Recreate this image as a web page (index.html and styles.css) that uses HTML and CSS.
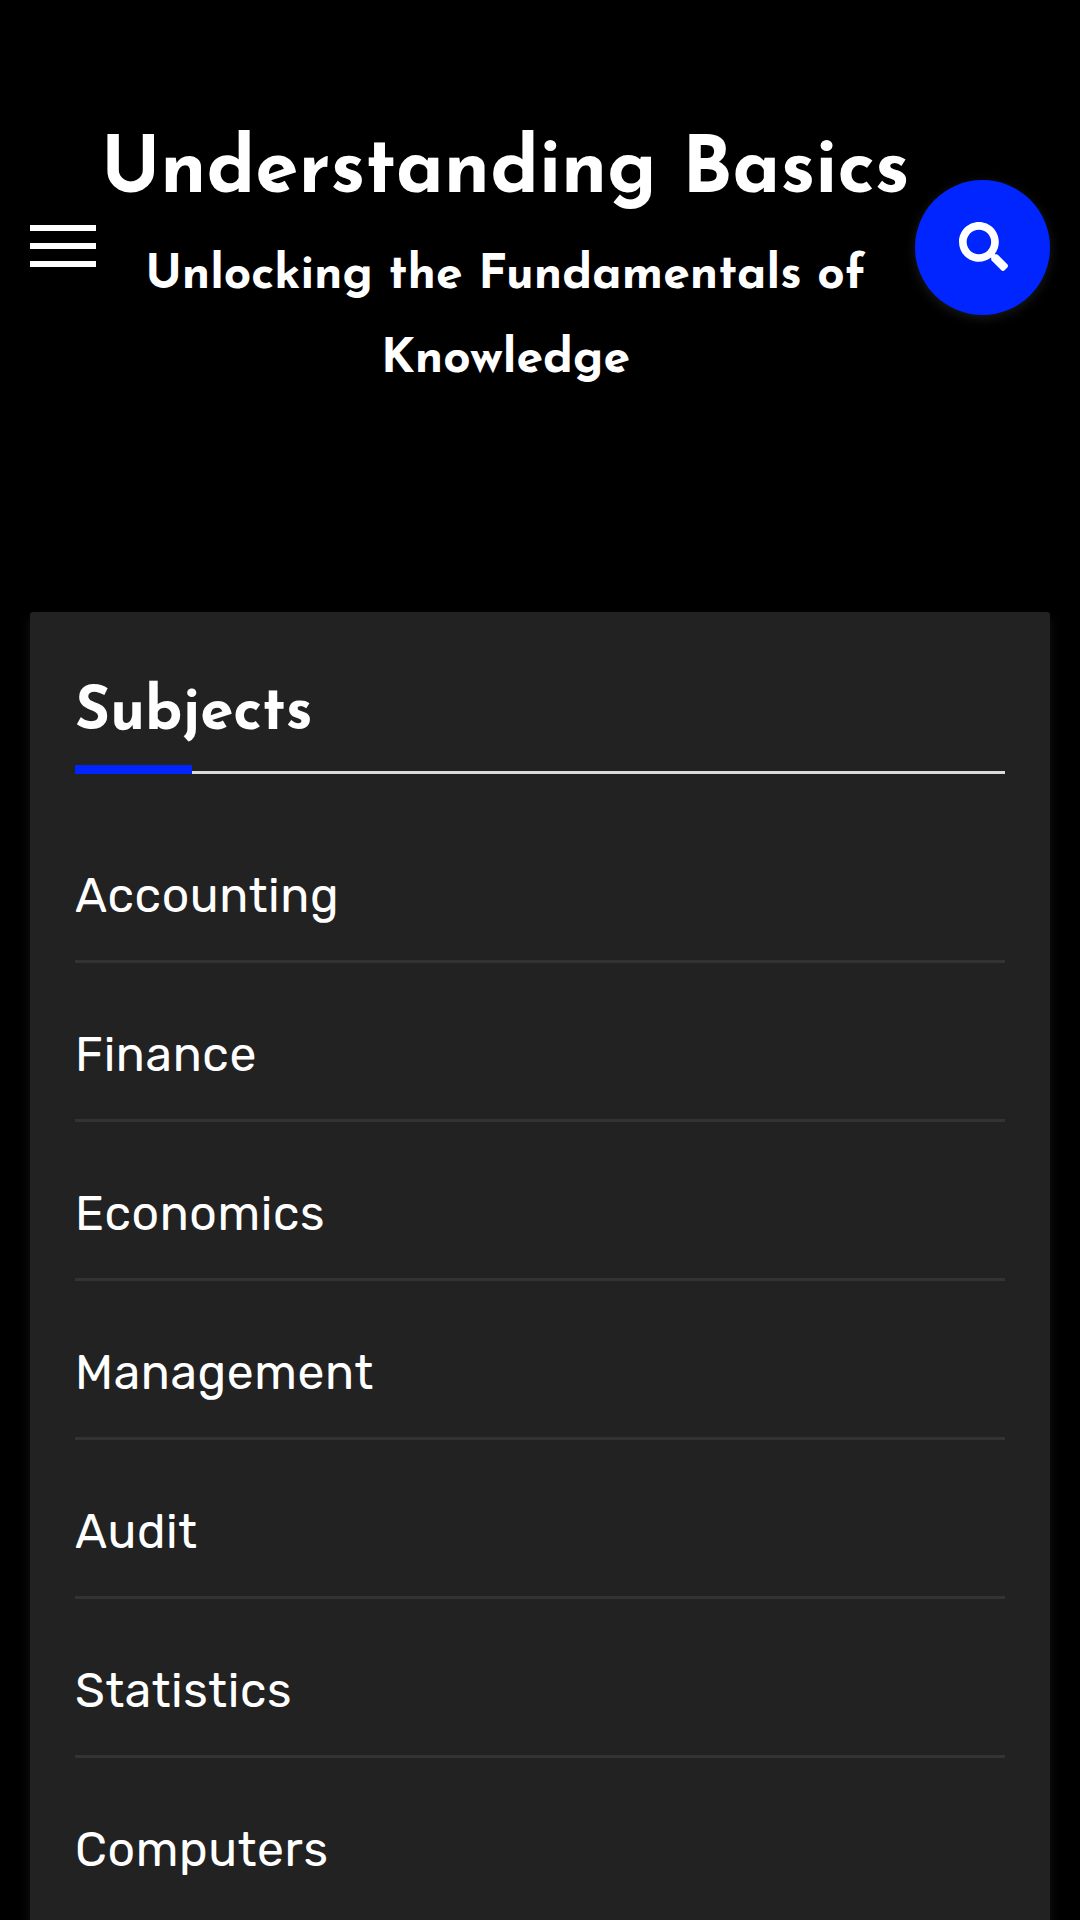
FILE: index.html
```html
<!DOCTYPE html>
<html lang="en">
<head>
<meta charset="utf-8">
<title>Understanding Basics</title>
<link rel="stylesheet" href="styles.css">
</head>
<body>
<header class="site-header">
  <button class="menu-toggle" aria-label="Menu"><span></span><span></span><span></span></button>
  <div class="branding">
    <h1 class="site-title">Understanding Basics</h1>
    <p class="site-tagline">Unlocking the Fundamentals of Knowledge</p>
  </div>
  <button class="search-toggle" aria-label="Search">
    <svg class="search-icon" viewBox="0 0 512 512"><path fill="currentColor" d="M505 442.7L405.3 343c-4.5-4.5-10.6-7-17-7H372c27.6-35.3 44-79.7 44-128C416 93.100 322.900 0 208 0S0 93.100 0 208s93.100 208 208 208c48.300 0 92.700-16.400 128-44v16.300c0 6.400 2.500 12.500 7 17l99.700 99.700c9.400 9.400 24.600 9.400 33.900 0l28.300-28.300c9.400-9.400 9.400-24.600.1-34zM208 336c-70.700 0-128-57.200-128-128 0-70.700 57.200-128 128-128 70.700 0 128 57.200 128 128 0 70.700-57.200 128-128 128z"/></svg>
  </button>
</header>
<main class="widget">
  <h2 class="widget-title">Subjects</h2>
  <ul class="subject-list">
    <li>Accounting</li>
    <li>Finance</li>
    <li>Economics</li>
    <li>Management</li>
    <li>Audit</li>
    <li>Statistics</li>
    <li>Computers</li>
  </ul>
</main>
</body>
</html>
```
FILE: styles.css
```css
* { box-sizing: border-box; margin: 0; padding: 0; }

body {
  height: 1920px;
  overflow: hidden;
  display: flex;
  flex-direction: column;
  padding: 0 30px;
  background: #000;
  color: #fff;
  font-family: Rubik, Inter, sans-serif;
}

button { border: 0; background: none; color: inherit; }

.site-header {
  flex: none;
  height: 612px;
  padding-top: 130px;
  display: flex;
  align-items: flex-start;
}

.menu-toggle {
  width: 66px;
  margin-top: 95px;
  display: flex;
  flex-direction: column;
  gap: 12px;
}
.menu-toggle span { height: 6px; background: #fff; }

.branding {
  flex: 1;
  text-align: center;
  font-family: "Josefin Sans", Lato, sans-serif;
  font-weight: 700;
}
.site-title { font-size: 78px; line-height: 86px; margin-bottom: 18px; white-space: nowrap; }
.site-tagline { font-size: 48px; line-height: 84px; }

.search-toggle {
  width: 135px;
  height: 135px;
  margin-top: 50px;
  border-radius: 50%;
  display: flex;
  align-items: center;
  justify-content: center;
  background: #0025ff;
  box-shadow: 0 3px 12px rgba(255, 255, 255, 0.1);
}
.search-icon { width: 49px; height: 49px; margin: -2px 0 0 2px; }

.widget {
  flex: 1;
  padding: 72px 45px 0;
  border-radius: 3px 3px 0 0;
  background: #222;
  box-shadow: 0 6px 12px rgba(255, 255, 255, 0.08);
}

.widget-title {
  position: relative;
  height: 90px;
  border-bottom: 3px solid #dadbdc;
  font: 700 60px/60px "Josefin Sans", Lato, sans-serif;
}
.widget-title::after {
  content: "";
  position: absolute;
  left: 0;
  bottom: -3px;
  width: 117px;
  height: 9px;
  background: #0025ff;
}

.subject-list { list-style: none; padding-top: 30px; }
.subject-list li {
  padding: 63px 0 36px;
  border-bottom: 3px solid #333;
  font-size: 48px;
  line-height: 57px;
  letter-spacing: 0.6px;
}
.subject-list li:last-child { border-bottom: 0; }
```
